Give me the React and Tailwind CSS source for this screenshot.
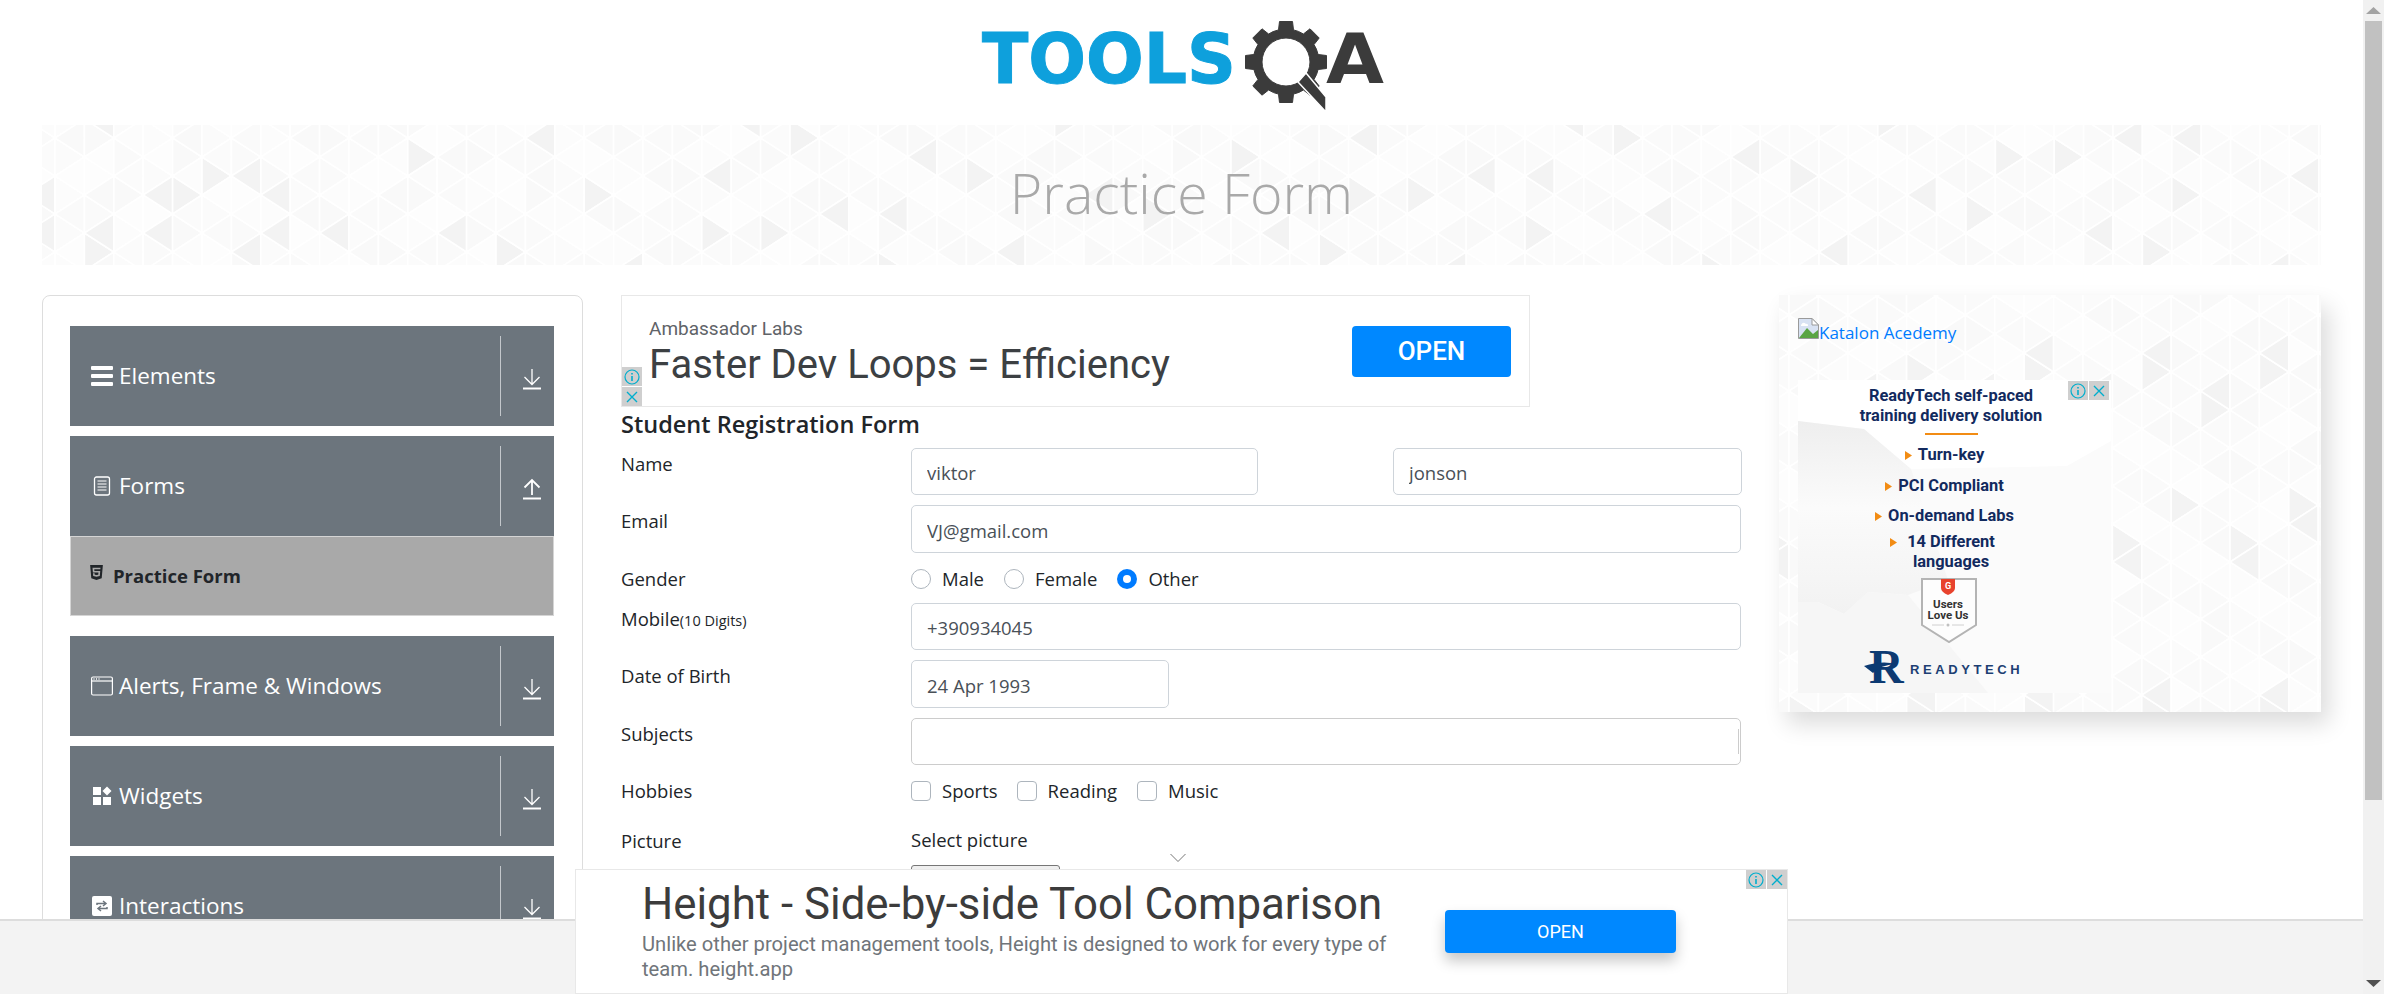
import React from 'react';
import { FaHtml5 } from 'react-icons/fa';

// triangle backdrop used by the banner and the right panel
const marked = new Set(['4:176:-1', '4:176:1', '5:157:1', '7:157:-1', '8:176:-1', '0:176:-1', '0:214:-1', '2:214:-1', '1:233:1', '4:214:-1', '8:214:-1', '7:233:-1', '10:214:-1', '2:100:-1']);

const buildTriangles = (w, h, originX, originY, salt) => {
  const dx = 29.4;
  const dy = 38;
  const out = [];
  for (let c = -1; c * dx + originX < w + dx; c++) {
    const x = originX + c * dx;
    const shift = Math.abs(c) % 2 === 0 ? 0 : -19;
    for (let k = -2; k * dy + originY + shift < h + dy; k++) {
      const top = originY + shift + k * dy;
      [-1, 1].forEach((dir) => {
        const hash = Math.abs((c * 73 + k * 151 + dir * 37 + salt) * 2654435761) % 97;
        let fill = ['#fbfbfb', '#fcfcfc', '#f9f9f9', '#fafafa', '#fdfdfd'][hash % 5];
        const id = `${c}:${Math.round(top + 125)}:${dir}`;
        if (salt === 0 ? marked.has(id) || (c > 10 && hash % 13 === 0) : hash % 12 === 0) fill = '#f3f3f3';
        out.push({ key: `${c}-${k}-${dir}`, points: `${x},${top} ${x},${top + dy} ${x + dir * dx},${top + dy / 2}`, fill });
      });
    }
  }
  return out;
};

const TriangleBackdrop = ({ w, h, originX, originY, salt }) => (
  <svg className="absolute inset-0" width={w} height={h}>
    <rect width={w} height={h} fill="#fafafa" />
    {buildTriangles(w, h, originX, originY, salt).map((t) => (
      <polygon key={t.key} points={t.points} fill={t.fill} stroke="#ffffff" strokeWidth="1.6" />
    ))}
  </svg>
);

const gearPath = () => {
  const cx = 312;
  const cy = 62;
  const pts = [];
  for (let i = 0; i < 8; i++) {
    const a = (i * Math.PI) / 4 - Math.PI / 2;
    const s = 0.23;
    const g = 0.17;
    [[a - s - g, 33], [a - s, 33], [a - s + 0.07, 41], [a + s - 0.07, 41], [a + s, 33]].forEach(([t, r]) => {
      pts.push(`${(cx + r * Math.cos(t)).toFixed(1)} ${(cy + r * Math.sin(t)).toFixed(1)}`);
    });
  }
  return `M${pts.join('L')}Z M${cx - 24} ${cy}a24 24 0 1 0 48 0a24 24 0 1 0 -48 0Z`;
};

const Logo = () => (
  <svg width="420" height="120" viewBox="0 0 420 120">
    <text x="8" y="83" fontFamily="'DejaVu Sans', sans-serif" fontWeight="700" fontSize="69" fill="#0ea0dc" stroke="#0ea0dc" strokeWidth="1" textLength="254" lengthAdjust="spacingAndGlyphs">TOOLS</text>
    <path d={gearPath()} fill="#3b3b3b" fillRule="evenodd" strokeLinejoin="round" stroke="#3b3b3b" strokeWidth="1" />
    <path d="M324 82 L332 73 L352 97 L352 112Z" fill="#3b3b3b" stroke="#ffffff" strokeWidth="1.5" />
    <text x="352" y="83" fontFamily="'DejaVu Sans', sans-serif" fontWeight="700" fontSize="69" fill="#3b3b3b" textLength="58" lengthAdjust="spacingAndGlyphs">A</text>
  </svg>
);

const ArrowDown = () => (
  <svg width="20" height="22" viewBox="0 0 20 22" fill="none" stroke="#ffffff" strokeWidth="1.3">
    <path d="M10 1V16M2.5 9L10 16.5L17.5 9" />
    <path d="M1 20.5H19" strokeWidth="2" />
  </svg>
);

const ArrowUp = () => (
  <svg width="20" height="22" viewBox="0 0 20 22" fill="none" stroke="#ffffff" strokeWidth="1.5">
    <path d="M10 17V2M2.5 9.5L10 2L17.5 9.5" strokeWidth="1.8" />
    <path d="M1 20.5H19" strokeWidth="2" />
  </svg>
);

const BarsIcon = () => (
  <svg width="22" height="20" viewBox="0 0 22 20" fill="#ffffff">
    <rect y="0" width="22" height="4" rx="1" />
    <rect y="8" width="22" height="4" rx="1" />
    <rect y="16" width="22" height="4" rx="1" />
  </svg>
);

const DocIcon = () => (
  <svg width="22" height="20" viewBox="0 0 22 20" fill="none" stroke="#ffffff" strokeWidth="1.3">
    <rect x="3.5" y="1" width="15" height="18" rx="2" />
    <path d="M6.5 5H15.5M6.5 8H15.5M6.5 11H15.5M6.5 14H15.5" strokeWidth="1" />
  </svg>
);

const WindowIcon = () => (
  <svg width="22" height="20" viewBox="0 0 22 20" fill="none" stroke="#ffffff" strokeWidth="1.2">
    <rect x="0.6" y="1" width="20.8" height="18" rx="1.5" />
    <path d="M1 5H21" />
    <path d="M2.5 3H3.5M5 3H6M7.5 3H8.5" strokeWidth="1.4" />
  </svg>
);

const WidgetIcon = () => (
  <svg width="22" height="20" viewBox="0 0 22 20" fill="#ffffff">
    <rect x="2" y="1" width="8" height="8" />
    <rect x="2" y="11" width="8" height="8" />
    <rect x="12" y="11" width="8" height="8" />
    <path d="M16 0.5L20.5 5L16 9.5L11.5 5Z" />
  </svg>
);

const SwapIcon = () => (
  <svg width="22" height="20" viewBox="0 0 22 20">
    <rect x="1" y="0" width="20" height="20" rx="2" fill="#ffffff" />
    <path d="M6 9V7.5H14M12 5L15 7.5L12 10M16 11V12.5H8M10 10L7 12.5L10 15" fill="none" stroke="#6c757d" strokeWidth="1.5" />
  </svg>
);

const NavBar = ({ icon, label, open }) => (
  <div className="h-[100px] bg-[#6c757d] flex items-start shrink-0">
    <div className="flex-1 flex items-center h-[60px] mt-[20px] pl-[21px] gap-[6px] text-white text-[22.5px]">
      {icon}
      <span>{label}</span>
    </div>
    <div className="w-[54px] h-[80px] mt-[10px] border-l border-[#c3c7cb] flex items-center justify-center pt-[6px] pl-[9px]">
      {open ? <ArrowUp /> : <ArrowDown />}
    </div>
  </div>
);

const Sidebar = () => (
  <div className="w-[541px] shrink-0 h-[700px] border border-[#dddddd] rounded-[8px] pl-[27px] pr-[28px] pt-[30px] flex flex-col">
    <NavBar icon={<BarsIcon />} label="Elements" />
    <div className="h-[10px] shrink-0" />
    <NavBar icon={<DocIcon />} label="Forms" open />
    <div className="h-[80px] bg-[#a9a9a9] border border-[#d5d5d5] flex items-center pl-[17px] gap-[8px] text-[#212529] font-bold text-[18.5px] shrink-0">
      <FaHtml5 className="text-[#212529] text-[17px] -mt-[8px]" />
      <span>Practice Form</span>
    </div>
    <div className="h-[20px] shrink-0" />
    <NavBar icon={<WindowIcon />} label="Alerts, Frame & Windows" />
    <div className="h-[10px] shrink-0" />
    <NavBar icon={<WidgetIcon />} label="Widgets" />
    <div className="h-[10px] shrink-0" />
    <NavBar icon={<SwapIcon />} label="Interactions" />
  </div>
);

const AdBadges = ({ className }) => (
  <div className={className}>
    <div className="w-[20px] h-[19px] bg-[#cfcfcf] flex items-center justify-center">
      <svg width="16" height="16" viewBox="0 0 16 16" fill="none" stroke="#00aecd" strokeWidth="1.2">
        <circle cx="8" cy="8" r="7" />
        <path d="M8 7V12M8 4V5.5" strokeWidth="1.6" />
      </svg>
    </div>
    <div className="w-[20px] h-[19px] bg-[#cfcfcf] flex items-center justify-center">
      <svg width="14" height="14" viewBox="0 0 14 14" fill="none" stroke="#00aecd" strokeWidth="1.4">
        <path d="M2 2L12 12M12 2L2 12" />
      </svg>
    </div>
  </div>
);

const Input = ({ value, className = '' }) => (
  <input
    readOnly
    value={value}
    className={`h-[47px] border border-[#ced4da] rounded-[5px] px-[15px] pt-[2px] text-[18.5px] text-[#495057] bg-white outline-none ${className}`}
  />
);

const Label = ({ children }) => (
  <div className="w-[290px] shrink-0 leading-[32px] text-[18.5px] text-[#212529]">{children}</div>
);

const Radio = ({ label, checked, gap }) => (
  <div className={`flex items-center ${gap}`}>
    {checked ? (
      <div className="w-[20px] h-[20px] rounded-full bg-[#007bff] flex items-center justify-center">
        <div className="w-[8px] h-[8px] rounded-full bg-white" />
      </div>
    ) : (
      <div className="w-[20px] h-[20px] rounded-full border border-[#adb5bd] bg-white" />
    )}
    <span className="ml-[11px] text-[18.5px] text-[#212529]">{label}</span>
  </div>
);

const Check = ({ label, gap }) => (
  <div className={`flex items-center ${gap}`}>
    <div className="w-[20px] h-[20px] rounded-[4px] border border-[#adb5bd] bg-white" />
    <span className="ml-[11px] text-[18.5px] text-[#212529]">{label}</span>
  </div>
);

const PracticeForm = () => (
  <div className="w-[1121px] shrink-0">
    {/* Anzeige oben */}
    <div className="relative w-[909px] h-[112px] border border-[#e8e8e8] font-['Roboto',sans-serif]">
      <div className="absolute left-[27px] top-[19px] text-[19px] text-[#5f6368]">Ambassador Labs</div>
      <div className="absolute left-[27px] top-[39px] text-[40px] text-[#3c4043]">Faster Dev Loops = Efficiency</div>
      <div className="absolute left-[730px] top-[30px] w-[159px] h-[51px] rounded-[4px] bg-[#0088ff] text-white text-[26px] font-medium flex items-center justify-center">OPEN</div>
      <AdBadges className="absolute left-0 bottom-0 flex flex-col gap-px" />
    </div>
    <div className="h-[34px] leading-[34px] text-[23.5px] font-semibold text-[#212529]">Student Registration Form</div>

    <div className="flex mt-[7px]">
      <Label>Name</Label>
      <Input value="viktor" className="w-[347px]" />
      <Input value="jonson" className="w-[349px] ml-[135px]" />
    </div>
    <div className="flex mt-[10px]">
      <Label>Email</Label>
      <Input value="VJ@gmail.com" className="w-[830px] h-[48px]" />
    </div>
    <div className="flex mt-[11px] h-[30px] items-center">
      <Label>Gender</Label>
      <Radio label="Male" gap="mr-[20px]" />
      <Radio label="Female" gap="mr-[20px]" />
      <Radio label="Other" checked />
    </div>
    <div className="flex mt-[9px]">
      <Label>
        Mobile<span className="text-[14.5px]">(10 Digits)</span>
      </Label>
      <Input value="+390934045" className="w-[830px]" />
    </div>
    <div className="flex mt-[10px]">
      <Label>Date of Birth</Label>
      <Input value="24 Apr 1993" className="w-[258px] h-[48px]" />
    </div>
    <div className="flex mt-[10px]">
      <Label>Subjects</Label>
      <div className="w-[830px] h-[47px] border-[1.5px] border-[#cccccc] rounded-[5px] flex justify-end items-center">
        <div className="w-px h-[25px] bg-[#cccccc] mr-px" />
      </div>
    </div>
    <div className="flex mt-[11px] h-[30px] items-center">
      <Label>Hobbies</Label>
      <Check label="Sports" gap="mr-[19px]" />
      <Check label="Reading" gap="mr-[20px]" />
      <Check label="Music" />
    </div>
    <div className="flex mt-[19px]">
      <Label>Picture</Label>
      <div className="relative">
        <div className="h-[30px] leading-[30px] text-[18.5px] text-[#212529]">Select picture</div>
        <svg className="absolute left-[258px] top-[27px]" width="18" height="12" viewBox="0 0 18 12" fill="none" stroke="#777777" strokeWidth="1">
          <path d="M1.5 2L9 9.5L16.5 2" />
        </svg>
        <div className="w-[149px] h-[30px] mt-[10px] border border-[#767676] rounded-[3px] bg-[#efefef]" />
      </div>
    </div>
  </div>
);

const BrokenImage = () => (
  <svg width="21" height="21" viewBox="0 0 21 21" className="shrink-0">
    <path d="M0.5 0.5H14L20.5 7V20.5H0.5Z" fill="#d8e2f3" stroke="#9a9a9a" />
    <path d="M14 0.5V7H20.5Z" fill="#ffffff" stroke="#9a9a9a" />
    <path d="M1 20L9 10L15 16L20 12V20Z" fill="#5aa544" />
    <path d="M3 7Q5 3 8 6Q10 5 10 8H3Z" fill="#ffffff" />
  </svg>
);

// Text bleibt zentriert, das Dreieck haengt links davor
const Bullet = ({ children, className = '', marker = '-left-[13px]' }) => (
  <div className={`text-center ${className}`}>
    <span className="relative">
      <svg width="7" height="9" viewBox="0 0 7 9" className={`absolute top-[6px] ${marker}`}><path d="M0 0L7 4.5L0 9Z" fill="#f28c14" /></svg>
      {children}
    </span>
  </div>
);

const ReadyTechAd = () => (
  <div className="relative w-[313px] h-[313px] bg-white font-['Roboto',sans-serif] text-[#122a5e] font-bold text-[16.4px]">
    <svg className="absolute inset-0" width="313" height="313">
      <defs>
        <linearGradient id="torn" x1="0" y1="0" x2="0" y2="1">
          <stop offset="0" stopColor="#eeeeee" />
          <stop offset="0.45" stopColor="#fbfbfb" />
          <stop offset="1" stopColor="#f2f2f2" />
        </linearGradient>
      </defs>
      <path d="M0 41L66 49L113 89L269 86L313 61V313H0Z" fill="#fbfbfb" />
      <path d="M0 41L66 49L113 89L150 200L110 215L70 212L46 234L20 222L0 222Z" fill="url(#torn)" />
      <path d="M0 222L20 222L46 234L70 212L110 215L190 313H0Z" fill="#f6f6f6" />
    </svg>
    <div className="absolute left-0 w-[306px] top-[6px] text-center leading-[20px]">
      <div>ReadyTech self-paced</div>
      <div>training delivery solution</div>
    </div>
    <div className="absolute left-[127px] top-[53px] w-[53px] h-[2px] bg-[#f28c14]" />
    <Bullet className="absolute left-0 w-[306px] top-[65px] leading-[20px] text-[16.5px]">Turn-key</Bullet>
    <Bullet className="absolute left-0 w-[306px] top-[96px] leading-[20px]">PCI Compliant</Bullet>
    <Bullet className="absolute left-0 w-[306px] top-[126px] leading-[20px]">On-demand Labs</Bullet>
    <Bullet className="absolute left-0 w-[306px] top-[152px] leading-[20px]" marker="-left-[17px]">14 Different</Bullet>
    <div className="absolute left-0 w-[306px] top-[172px] text-center leading-[20px]">languages</div>
    <svg className="absolute left-[122px] top-[198px]" width="58" height="66" viewBox="0 0 58 66">
      <path d="M2 1H56V47L29 64L2 47Z" fill="#fdfdfd" stroke="#b4b4b4" strokeWidth="2" />
      <path d="M21 1H35V10Q35 14 28 17Q21 14 21 10Z" fill="#e8432e" />
      <text x="28" y="11" textAnchor="middle" fontSize="9" fontWeight="700" fill="#ffffff" fontFamily="Roboto, sans-serif">G</text>
      <text x="28" y="30" textAnchor="middle" fontSize="11.5" fontWeight="700" fill="#333333" fontFamily="Roboto, sans-serif">Users</text>
      <text x="28" y="41" textAnchor="middle" fontSize="11.5" fontWeight="700" fill="#333333" fontFamily="Roboto, sans-serif">Love Us</text>
      <path d="M12 47H24M32 47H44" stroke="#d0d0d0" />
      <circle cx="28" cy="47" r="1.5" fill="#c0c0c0" />
    </svg>
    <svg className="absolute left-[66px] top-[248px]" width="190" height="72" viewBox="0 0 190 72">
      <text x="5" y="55" fontFamily="'Liberation Serif', serif" fontWeight="700" fontSize="48" fill="#0c3a72">R</text>
      <path d="M0 38Q18 32 32 36Q16 37 9 45Z" fill="#0c3a72" />
      <text x="46" y="46" fontFamily="'Liberation Sans', sans-serif" fontSize="13" letterSpacing="3.6" fill="#1d3f73">READYTECH</text>
    </svg>
    <AdBadges className="absolute right-[2px] top-[1px] flex gap-px" />
  </div>
);

const RightPanel = () => (
  <div className="relative w-[542px] h-[417px] shrink-0 shadow-[8px_12px_22px_rgba(0,0,0,0.14)]">
    <TriangleBackdrop w={542} h={417} originX={10} originY={20} salt={5} />
    <div className="relative pt-[19px] pl-[19px]">
      <div className="flex h-[42px] text-[#007bff] text-[17px] leading-[26px] items-start pt-[4px]">
        <BrokenImage />
        <span className="mt-[2px]">Katalon Acedemy</span>
      </div>
      <div className="mt-[24px]">
        <ReadyTechAd />
      </div>
    </div>
  </div>
);

const BottomAd = () => (
  <div className="absolute left-[575px] bottom-0 w-[1213px] h-[125px] bg-white border border-[#e8e8e8] font-['Roboto',sans-serif]">
    <div className="absolute left-[66px] top-[4px] text-[43.8px] text-[#3c3c3c] leading-[60px] whitespace-nowrap">Height - Side-by-side Tool Comparison</div>
    <div className="absolute left-[66px] top-[62px] w-[760px] text-[20.2px] text-[#70757a] leading-[25px]">Unlike other project management tools, Height is designed to work for every type of team. height.app</div>
    <div className="absolute left-[869px] top-[40px] w-[231px] h-[43px] rounded-[4px] bg-[#0088ff] text-white text-[18px] flex items-center justify-center shadow-[0_8px_14px_rgba(0,0,0,0.22)]">OPEN</div>
    <AdBadges className="absolute right-0 top-0 flex gap-px" />
  </div>
);

const Scrollbar = () => (
  <div className="w-[21px] h-full bg-[#f1f1f1] flex flex-col items-center shrink-0">
    <svg className="mt-[7px]" width="15" height="7" viewBox="0 0 15 7"><path d="M7.5 0L15 7H0Z" fill="#a3a3a3" /></svg>
    <div className="w-[17px] h-[779px] bg-[#c1c1c1] mt-[7px]" />
    <svg className="mt-auto mb-[7px]" width="15" height="7" viewBox="0 0 15 7"><path d="M0 0H15L7.5 7Z" fill="#505050" /></svg>
  </div>
);

export default function App() {
  return (
    <div className="flex h-[994px] overflow-hidden bg-white font-['Open_Sans',sans-serif]">
      <div className="relative flex-1 overflow-hidden">
        <div className="h-[125px] flex justify-center pl-[4px]">
          <Logo />
        </div>
        <div className="relative mx-[42px] h-[140px] overflow-hidden flex items-center justify-center pb-[5px]">
          <TriangleBackdrop w={2279} h={140} originX={13} originY={51} salt={0} />
          <h1 className="relative text-[#a9a9a9] text-[55.5px] font-light">Practice Form</h1>
        </div>
        <div className="flex px-[42px] mt-[30px] items-start">
          <Sidebar />
          <div className="ml-[38px]">
            <PracticeForm />
          </div>
          <div className="ml-[37px]">
            <RightPanel />
          </div>
        </div>
        {/* Leiste und Anzeige unten */}
        <div className="absolute inset-x-0 bottom-0 h-[75px] bg-[#f3f3f3] border-t-2 border-[#dddddd]" />
        <BottomAd />
      </div>
      <Scrollbar />
    </div>
  );
}
